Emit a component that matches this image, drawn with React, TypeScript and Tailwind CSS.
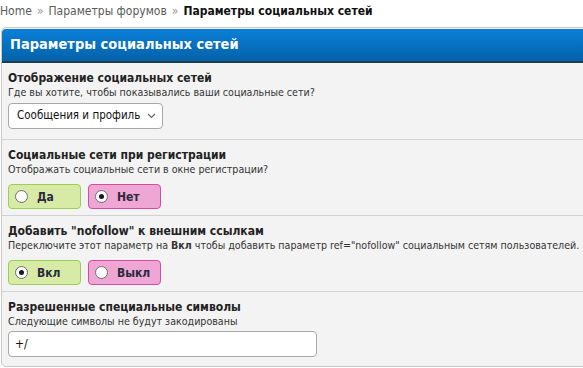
import React from "react";

const font = { fontFamily: '"DejaVu Sans Condensed", "DejaVu Sans", Verdana, sans-serif' };

function Radio({ checked }: { checked: boolean }) {
  return (
    <span className="w-[13px] h-[13px] rounded-full border border-[#6f6f6f] bg-white flex items-center justify-center shrink-0">
      {checked && <span className="w-[5px] h-[5px] rounded-full bg-[#1a1a1a]" />}
    </span>
  );
}

function Toggle({ label, checked, tone }: { label: string; checked: boolean; tone: "green" | "pink" }) {
  const cls =
    tone === "green"
      ? "bg-[#d7eba7] border-[#9ccd55]"
      : "bg-[#eea6d5] border-[#d64b9d]";
  return (
    <div className={`h-[25px] rounded-[4px] border flex items-center gap-[9px] pl-[6px] ${cls} w-[73px]`}>
      <Radio checked={checked} />
      <span className="text-[12px] font-bold text-[#2a2a3a] whitespace-nowrap">{label}</span>
    </div>
  );
}

function Section({
  title,
  sub,
  children,
  last,
  gap,
  pb,
}: {
  title: string;
  sub: React.ReactNode;
  children: React.ReactNode;
  last?: boolean;
  gap: string;
  pb: string;
}) {
  return (
    <div className={`px-[6px] pt-[8px] ${pb} ${last ? "" : "border-b border-[#d2d2d2]"}`}>
      <div className="text-[12px] font-bold text-[#222] leading-[14px] whitespace-nowrap">{title}</div>
      <div className="text-[10.6px] text-[#333] leading-[14px] whitespace-nowrap">{sub}</div>
      <div className={gap}>{children}</div>
    </div>
  );
}

export default function App() {
  return (
    <div className="w-[583px] h-[368px] bg-white overflow-hidden font-stretch-condensed" style={font}>
      <div className="h-[27px] flex items-center pb-[6px] text-[12px] text-[#5a5a5a] whitespace-nowrap">
        <span>Home</span>
        <span className="mx-[5px] text-[#999]">»</span>
        <span>Параметры форумов</span>
        <span className="mx-[5px] text-[#999]">»</span>
        <span className="font-bold text-[#111]">Параметры социальных сетей</span>
      </div>
      <div className="w-[600px] ml-[1px] border border-[#c9c9c9] rounded-[5px] bg-[#f3f3f3] overflow-hidden">
        <div className="h-[34px] bg-gradient-to-b from-[#0a80d8] to-[#0462aa] border-b-2 border-[#1d3d4a] flex items-center pl-[8px] mt-[1px] rounded-t-[4px]">
          <span className="text-white font-bold text-[14.5px] whitespace-nowrap">Параметры социальных сетей</span>
        </div>
        <Section
          title="Отображение социальных сетей"
          sub="Где вы хотите, чтобы показывались ваши социальные сети?"
          gap="mt-[4px]"
          pb="pb-[10px]"
        >
          <div className="w-[155px] h-[26px] bg-white border border-[#a8a8a8] rounded-[4px] flex items-center justify-between pl-[8px] pr-[6px]">
            <span className="text-[11.5px] text-[#111] whitespace-nowrap">Сообщения и профиль</span>
            <svg width="9" height="6" viewBox="0 0 9 6"><path d="M1 1l3.5 3.5L8 1" fill="none" stroke="#666" strokeWidth="1.2" /></svg>
          </div>
        </Section>
        <Section
          title="Социальные сети при регистрации"
          sub="Отображать социальные сети в окне регистрации?"
          gap="mt-[8px]"
          pb="pb-[6px]"
        >
          <div className="flex gap-[7px]">
            <Toggle label="Да" checked={false} tone="green" />
            <Toggle label="Нет" checked={true} tone="pink" />
          </div>
        </Section>
        <Section
          title='Добавить "nofollow" к внешним ссылкам'
          sub={
            <>
              Переключите этот параметр на <b>Вкл</b> чтобы добавить параметр ref="nofollow" социальным сетям пользователей.
            </>
          }
          gap="mt-[8px]"
          pb="pb-[6px]"
        >
          <div className="flex gap-[7px]">
            <Toggle label="Вкл" checked={true} tone="green" />
            <Toggle label="Выкл" checked={false} tone="pink" />
          </div>
        </Section>
        <Section
          title="Разрешенные специальные символы"
          sub="Следующие символы не будут закодированы"
          gap="mt-[3px]"
          pb="pb-[9px]"
          last
        >
          <div className="w-[309px] h-[26px] bg-white border border-[#a8a8a8] rounded-[4px] flex items-center pl-[6px] text-[12px] text-[#111]">
            +/
          </div>
        </Section>
      </div>
    </div>
  );
}
